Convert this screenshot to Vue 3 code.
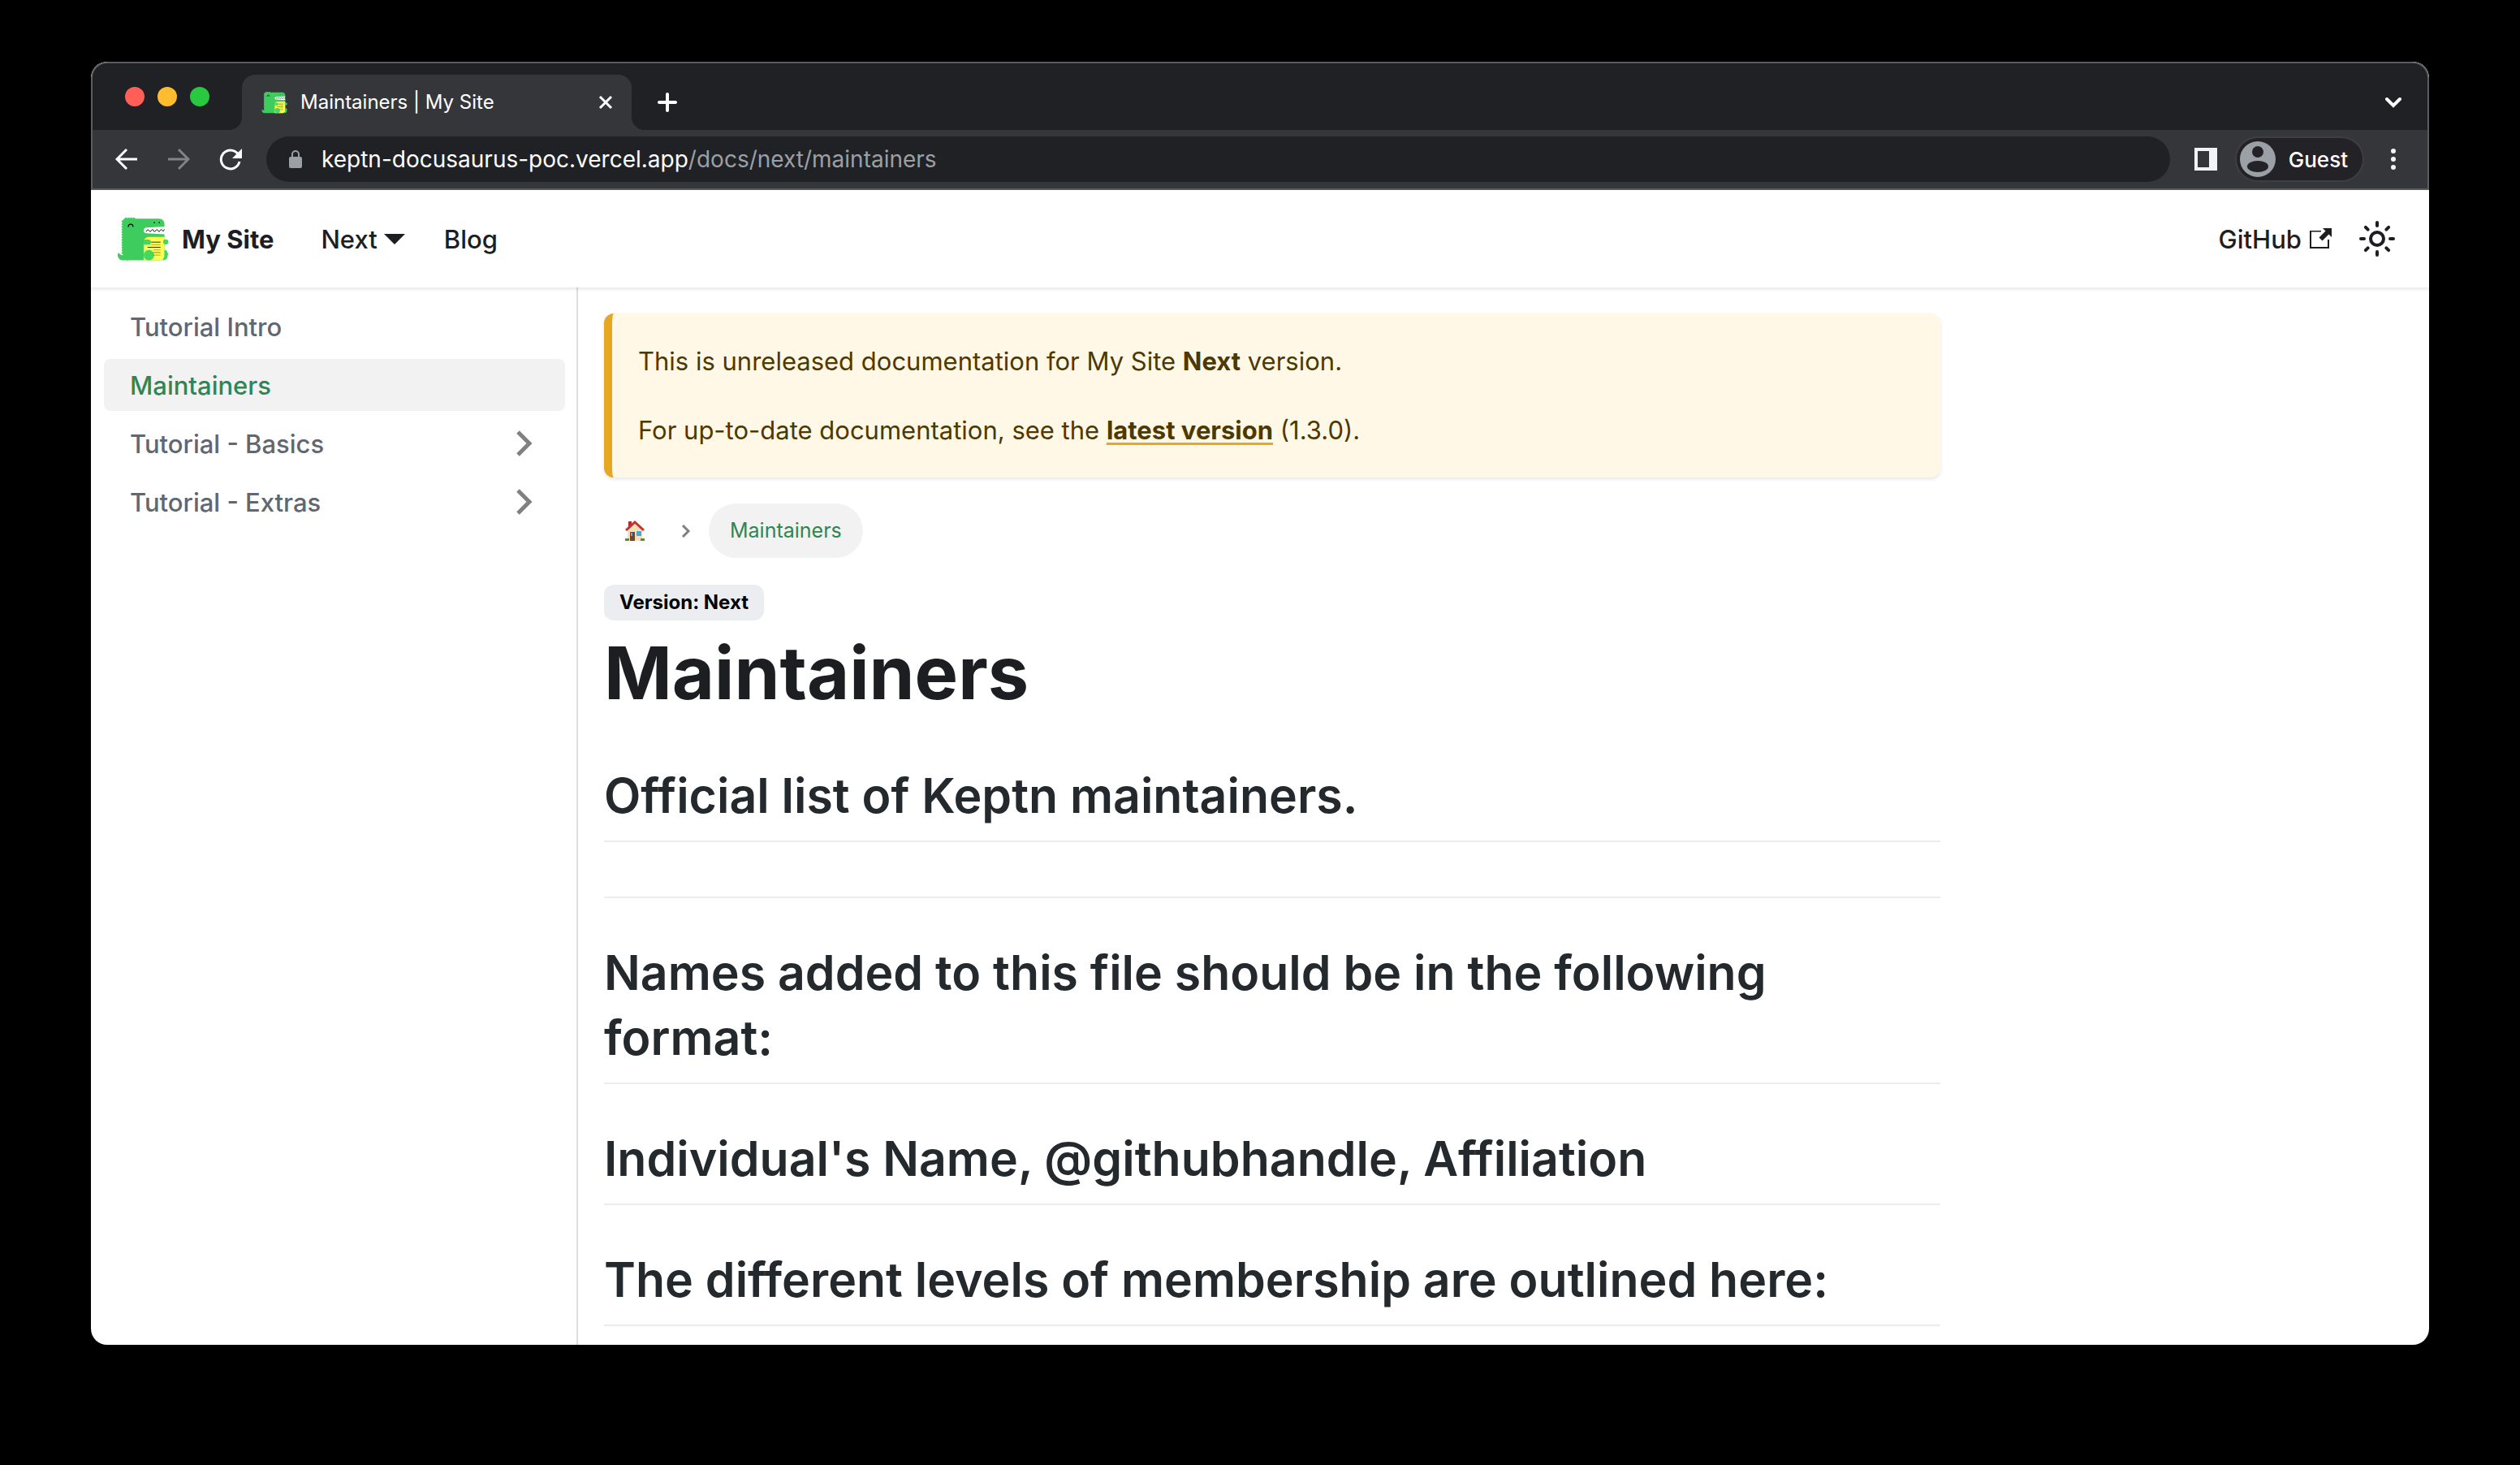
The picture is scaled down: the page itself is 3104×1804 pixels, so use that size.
<script setup>
const menu = [
  { label: 'Tutorial Intro' },
  { label: 'Maintainers', active: true },
  { label: 'Tutorial - Basics', nested: true },
  { label: 'Tutorial - Extras', nested: true }
]
const headings = [
  'Official list of Keptn maintainers.',
  '',
  'Names added to this file should be in the following format:',
  "Individual's Name, @githubhandle, Affiliation",
  'The different levels of membership are outlined here:'
]
const sunRays = [0, 45, 90, 135, 180, 225, 270, 315]
const backBumps = Array.from({ length: 13 }, (_, i) => 34 + i * 10)
const headBumps = [35, 45, 55, 65]
const paperLines = [
  { x: 132, y: 113, w: 36, o: 1 },
  { x: 132, y: 123, w: 36, o: 0.4 },
  { x: 118, y: 133, w: 50, o: 1 },
  { x: 140, y: 143, w: 28, o: 0.4 },
  { x: 140, y: 153, w: 28, o: 0.6 },
  { x: 140, y: 163, w: 28, o: 0.4 }
]
</script>

<template>
  <div class="desktop">
    <svg class="defs" aria-hidden="true">
      <symbol id="dino" viewBox="0 0 200 200">
        <path fill="#fff" d="M99 52h84v34H99z" />
        <g fill="#3ecc5f">
          <path d="M23 163c-7.4 0-13.8-4-17.3-10A20 20 0 0 0 3 163c0 11 9 20 20 20h20v-20z" />
          <circle v-for="y in backBumps" :key="y" cx="23" :cy="y" r="5" />
          <circle v-for="x in headBumps" :key="x" :cx="x" cy="23" r="5" />
          <path d="M113 57.4 183 53V43c0-11-9-20-20-20H33a10 10 0 0 0-10 10v130c0 11 9 20 20 20h120c11 0 20-9 20-20V83l-70-4.4A10.6 10.6 0 0 1 103 68c0-5.600 4.400-10.300 10-10.600z" />
        </g>
        <path fill="#ffff50" d="M183 93v70c0 11-9 20-20 20h-60v-70c0-11 9-20 20-20z" />
        <g fill="#44d860">
          <circle cx="188" cy="112" r="10" />
          <path d="M183 143c8 0 12 4 11 10 5 2 5 9 1 11 1 8-2 19-22 19 6-4 10-11 10-20z" />
          <path d="M103 103h18a10 10 0 0 1 0 20h-18z" />
          <circle cx="123" cy="163" r="20" />
        </g>
        <path v-for="l in paperLines" :key="l.y" :d="`M${l.x} ${l.y}h${l.w}`" stroke="#000" stroke-width="2.500" :opacity="l.o" />
        <path d="M44 53a9 9 0 0 1 18 0" fill="none" stroke="#000" stroke-width="4" stroke-linecap="round" />
        <circle cx="144" cy="38" r="2.500" /><circle cx="163" cy="38" r="2.500" />
        <path d="m112 72 8-7 8 8 9-9 8 9 9-9 8 9 9-9 7 7 5-7" fill="none" stroke="#000" stroke-width="3" />
      </symbol>
    </svg>

    <div class="window">
      <div class="tabstrip">
        <div class="lights">
          <button class="light red" aria-label="Close window"></button>
          <button class="light yellow" aria-label="Minimize window"></button>
          <button class="light green" aria-label="Zoom window"></button>
        </div>
        <div class="tab">
          <svg class="favicon" aria-hidden="true"><use href="#dino" /></svg>
          <span class="tab-title">Maintainers | My Site</span>
          <button class="icon-btn" aria-label="Close tab">
            <svg width="20" height="20" viewBox="0 0 20 20"><path d="m3 3 14 14M17 3 3 17" stroke="#fff" stroke-width="3" /></svg>
          </button>
        </div>
        <button class="icon-btn new-tab" aria-label="New tab">
          <svg width="24" height="24" viewBox="0 0 24 24"><path d="M12 2v20M2 12h20" stroke="#fff" stroke-width="4" stroke-linecap="round" /></svg>
        </button>
        <button class="icon-btn search-tabs" aria-label="Search tabs">
          <svg width="20" height="14" viewBox="0 0 20 14"><path d="m2 3 8 8 8-8" fill="none" stroke="#fff" stroke-width="4" stroke-linecap="round" /></svg>
        </button>
      </div>

      <div class="toolbar">
        <button class="icon-btn" aria-label="Back">
          <svg width="28" height="28" viewBox="0 0 28 28"><path d="M27 14H3M14 2 2 14l12 12" fill="none" stroke="#fff" stroke-width="3" /></svg>
        </button>
        <button class="icon-btn forward" aria-label="Forward" disabled>
          <svg width="28" height="28" viewBox="0 0 28 28"><path d="M1 14h24M14 2l12 12-12 12" fill="none" stroke="#828386" stroke-width="3" /></svg>
        </button>
        <button class="icon-btn reload" aria-label="Reload">
          <svg width="28" height="28" viewBox="0 0 28 28"><path d="M23 7.500A11.500 11.500 0 1 0 25 17" fill="none" stroke="#fff" stroke-width="3" /><path d="M28 1v12H16z" fill="#fff" /></svg>
        </button>
        <div class="omnibox">
          <svg width="16" height="22" viewBox="0 0 16 22"><rect y="8" width="16" height="14" rx="2" fill="#9aa0a6" /><path d="M4 9V5a4 4 0 0 1 8 0v4" fill="none" stroke="#9aa0a6" stroke-width="2" /></svg>
          <div class="url" role="textbox" contenteditable="true" spellcheck="false" aria-label="Address">keptn-docusaurus-poc.vercel.app<span class="path">/docs/next/maintainers</span></div>
        </div>
        <button class="icon-btn panel" aria-label="Side panel">
          <svg width="28" height="28" viewBox="0 0 28 28"><path d="M0 0h28v28H0zM4 4v20h14V4z" fill="#f1f3f4" fill-rule="evenodd" /></svg>
        </button>
        <button class="guest">
          <svg width="44" height="44" viewBox="0 0 44 44"><circle cx="22" cy="22" r="22" fill="#9aa0a6" /><circle cx="22" cy="13" r="7" fill="#232227" /><ellipse cx="22" cy="31" rx="13" ry="7" fill="#232227" /></svg>
          Guest
        </button>
        <button class="icon-btn dots" aria-label="Browser menu">
          <svg width="8" height="28" viewBox="0 0 8 28" fill="#f1f3f4"><circle cx="4" cy="4" r="3" /><circle cx="4" cy="14" r="3" /><circle cx="4" cy="24" r="3" /></svg>
        </button>
      </div>

      <div class="site">
        <nav class="navbar" aria-label="Main">
          <a class="brand" href="#"><svg class="logo" aria-hidden="true"><use href="#dino" /></svg><b>My Site</b></a>
          <a class="nav-link version" href="#">Next<svg width="26" height="13" viewBox="0 0 26 13"><path d="M0 0h26L13 13z" fill="#1c1e21" /></svg></a>
          <a class="nav-link" href="#">Blog</a>
          <a class="nav-link github" href="#">GitHub
            <svg width="27" height="27" viewBox="0 0 27 27"><path fill="#1c1e21" d="M0 3h14v1.500H2V23h20V14h2v11H0z" /><path fill="#1c1e21" d="M16 0h11v11l-3.500-3.500-8 8-4-4 8-8z" /></svg>
          </a>
          <button class="icon-btn" aria-label="Switch between dark and light mode">
            <svg width="44" height="44" viewBox="0 0 44 44" fill="none" stroke="#1c1e21" stroke-width="4">
              <circle cx="22" cy="22" r="8" />
              <path v-for="a in sunRays" :key="a" d="M22 2v4" stroke-linecap="round" :transform="`rotate(${a} 22 22)`" />
            </svg>
          </button>
        </nav>

        <div class="body">
          <aside class="sidebar">
            <ul class="menu">
              <li v-for="item in menu" :key="item.label">
                <a class="menu-link" :class="{ active: item.active }" href="#">
                  {{ item.label }}
                  <svg v-if="item.nested" width="20" height="32" viewBox="0 0 20 32"><path d="m2 2 14 14L2 30" fill="none" stroke="#808080" stroke-width="5" /></svg>
                </a>
              </li>
            </ul>
          </aside>

          <main class="main">
            <div class="col">
              <div class="alert" role="alert">
                <p>This is unreleased documentation for My Site <b>Next</b> version.</p>
                <p>For up-to-date documentation, see the <a href="#">latest version</a> (1.3.0).</p>
              </div>
              <nav class="crumbs" aria-label="Breadcrumbs">
                <a class="crumb" href="#" aria-label="Home page">
                  <svg width="24" height="26" viewBox="0 0 24 26">
                    <path d="M3 11 13 3l8 8v14H3z" fill="#f6dfb9" />
                    <path d="M4 1h4v6l-4 4z" fill="#b5282c" />
                    <path d="M1 12 12 2l11 10" fill="none" stroke="#c8312f" stroke-width="3" />
                    <path d="M6 14h6v11H6z" fill="#7a4326" /><path d="M7 15h2v4H7z" fill="#5fb0dd" />
                    <path d="M14 13h6v6h-6z" fill="#4fa6dc" />
                    <path d="M0 22h5v3H0zM19 22h5v3h-5z" fill="#5a8f2e" />
                  </svg>
                </a>
                <svg class="sep" width="12" height="16" viewBox="0 0 12 16"><path d="m2 1 7 7-7 7" fill="none" stroke="#808080" stroke-width="3" /></svg>
                <span class="crumb current">Maintainers</span>
              </nav>
              <span class="badge">Version: Next</span>
              <h1>Maintainers</h1>
              <h2 v-for="(h, i) in headings" :key="i">{{ h }}</h2>
            </div>
          </main>
        </div>
      </div>
    </div>
  </div>
</template>

<style>
body {
  background: #000;
}
</style>

<style scoped>
* {
  box-sizing: border-box;
}
.desktop {
  display: flex;
  height: 100vh;
  padding: 76px 112px 148px;
  font-family: Inter, "Liberation Sans", sans-serif;
}
.defs {
  position: absolute;
  width: 0;
  height: 0;
}
a {
  color: inherit;
  text-decoration: none;
}
button {
  font: inherit;
}
svg {
  display: block;
  flex: none;
}
.window {
  flex: 1;
  min-width: 0;
  display: flex;
  flex-direction: column;
  border-radius: 20px;
  overflow: hidden;
  background: #fff;
}
.tabstrip {
  display: flex;
  align-items: center;
  height: 84px;
  padding: 14px 32px 0 40px;
  background: #202124;
  border: solid #5c5c60;
  border-width: 2px 2px 0;
  border-radius: 20px 20px 0 0;
}
.lights {
  display: flex;
  gap: 16px;
  margin: -14px 40px 0 0;
}
.light {
  width: 24px;
  height: 24px;
  padding: 0;
  border: 0;
  border-radius: 50%;
}
.red {
  background: #ff5f57;
}
.yellow {
  background: #febc2e;
}
.green {
  background: #28c840;
}
.tab {
  position: relative;
  display: flex;
  align-items: center;
  width: 480px;
  height: 68px;
  padding: 0 22px 0 24px;
  border-radius: 16px 16px 0 0;
  background: #35363a;
}
.tab::before,
.tab::after {
  content: "";
  position: absolute;
  bottom: 0;
  width: 16px;
  height: 16px;
}
.tab::before {
  right: 100%;
  background: radial-gradient(circle at 0 0, transparent 16px, #35363a 16px);
}
.tab::after {
  left: 100%;
  background: radial-gradient(circle at 100% 0, transparent 16px, #35363a 16px);
}
.favicon {
  width: 32px;
  height: 32px;
}
.tab-title {
  flex: 1;
  margin-left: 16px;
  font-size: 24px;
  line-height: 32px;
  color: #fff;
}
.icon-btn {
  padding: 0;
  border: 0;
  background: none;
}
.new-tab {
  margin-left: 32px;
}
.search-tabs {
  margin-left: auto;
}
.toolbar {
  display: flex;
  align-items: center;
  height: 74px;
  padding: 0 38px 0 28px;
  background: #35363a;
  border: solid #5c5c60;
  border-width: 0 2px 2px;
}
.forward {
  margin-left: 36px;
}
.reload {
  margin: 0 30px 0 36px;
}
.omnibox {
  flex: 1;
  display: flex;
  align-items: center;
  gap: 24px;
  height: 56px;
  padding: 0 28px;
  border-radius: 28px;
  background: #202124;
}
.url {
  flex: 1;
  font-size: 28px;
  color: #fff;
  outline: 0;
}
.path {
  color: #9aa0a6;
}
.panel {
  margin: 0 22px 0 30px;
}
.guest {
  display: flex;
  align-items: center;
  gap: 16px;
  height: 56px;
  padding: 0 18px 0 4px;
  border: 2px solid #3f3e43;
  border-radius: 28px;
  background: #232227;
  color: #fff;
  font-size: 26px;
  font-weight: 500;
}
.dots {
  margin-left: 32px;
}
.site {
  flex: 1;
  min-height: 0;
  display: flex;
  flex-direction: column;
  font-size: 31px;
  line-height: 53px;
  color: #1c1e21;
}
.navbar {
  position: relative;
  display: flex;
  align-items: center;
  height: 120px;
  padding: 0 42px 0 32px;
  box-shadow: 0 2px 4px rgba(0, 0, 0, 0.1);
}
.brand {
  display: flex;
  align-items: center;
  gap: 16px;
}
.logo {
  width: 64px;
  height: 64px;
}
.nav-link {
  font-weight: 500;
}
.version {
  display: flex;
  align-items: center;
  gap: 8px;
  margin: 0 48px 0 58px;
}
.github {
  display: flex;
  align-items: center;
  gap: 10px;
  margin: 0 34px 0 auto;
}
.body {
  flex: 1;
  min-height: 0;
  display: flex;
}
.sidebar {
  width: 600px;
  border-right: 2px solid #dadde1;
}
.menu {
  display: flex;
  flex-direction: column;
  gap: 8px;
  margin: 0;
  padding: 16px 14px 16px 16px;
  list-style: none;
}
.menu-link {
  display: flex;
  align-items: center;
  justify-content: space-between;
  height: 64px;
  padding: 0 40px 0 32px;
  border-radius: 8px;
  font-weight: 500;
  color: #606770;
}
.menu-link.active {
  background: #f2f2f2;
  color: #2e8555;
}
.main {
  flex: 1;
  min-width: 0;
  overflow: hidden;
}
.col {
  width: 75%;
  padding: 32px 32px 0;
}
.alert {
  display: flex;
  flex-direction: column;
  gap: 32px;
  padding: 32px;
  border-left: 10px solid #e6a723;
  border-radius: 12px;
  background: #fff8e6;
  color: #4d3800;
  box-shadow: 0 2px 4px rgba(0, 0, 0, 0.1);
}
.alert p {
  margin: 0;
}
.alert a {
  font-weight: 700;
  text-decoration: underline #e6a723 3px;
  text-underline-offset: 4px;
}
.crumbs {
  display: flex;
  align-items: center;
  margin: 32px 0 33px;
  font-size: 25px;
  line-height: 43px;
}
.crumb {
  padding: 12px 26px;
  border-radius: 34px;
}
.sep {
  margin: 0 22px 0 19px;
}
.current {
  background: #f2f2f2;
  color: #2e8555;
}
.badge {
  display: block;
  width: fit-content;
  padding: 7px 19px;
  border-radius: 12px;
  background: #ebedf0;
  color: #000;
  font-size: 24px;
  line-height: 30px;
  font-weight: 700;
}
h1 {
  margin: 5px 0 47px;
  font-size: 90px;
  line-height: 120px;
  font-weight: 700;
}
h2 {
  margin: 0 0 48px;
  padding: 4px 0 15px;
  border-bottom: 2px solid #eaecef;
  font-size: 59px;
  line-height: 80px;
  font-weight: 600;
  color: #24292e;
}
</style>
